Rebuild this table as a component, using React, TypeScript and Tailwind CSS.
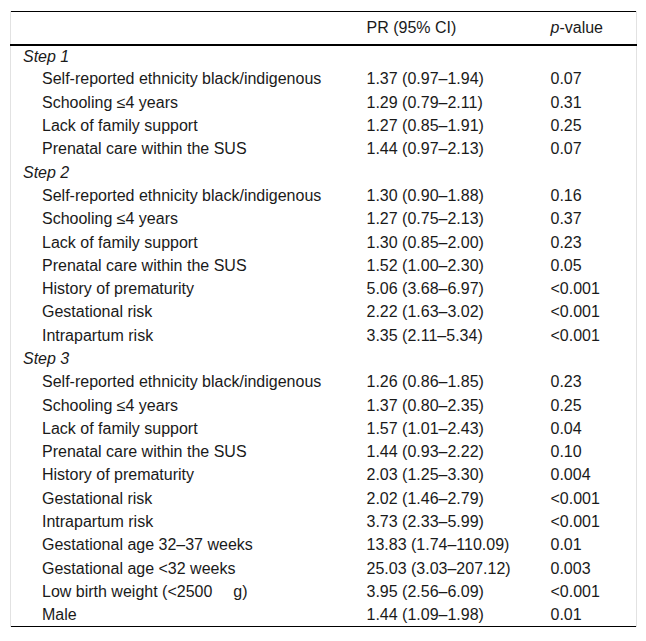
import { Fragment } from 'react';

type Row = { label: string; pr: string; p: string };

type Step = { title: string; rows: Row[] };

const steps: Step[] = [
  {
    title: 'Step 1',
    rows: [
      { label: 'Self-reported ethnicity black/indigenous', pr: '1.37 (0.97–1.94)', p: '0.07' },
      { label: 'Schooling ≤4 years', pr: '1.29 (0.79–2.11)', p: '0.31' },
      { label: 'Lack of family support', pr: '1.27 (0.85–1.91)', p: '0.25' },
      { label: 'Prenatal care within the SUS', pr: '1.44 (0.97–2.13)', p: '0.07' },
    ],
  },
  {
    title: 'Step 2',
    rows: [
      { label: 'Self-reported ethnicity black/indigenous', pr: '1.30 (0.90–1.88)', p: '0.16' },
      { label: 'Schooling ≤4 years', pr: '1.27 (0.75–2.13)', p: '0.37' },
      { label: 'Lack of family support', pr: '1.30 (0.85–2.00)', p: '0.23' },
      { label: 'Prenatal care within the SUS', pr: '1.52 (1.00–2.30)', p: '0.05' },
      { label: 'History of prematurity', pr: '5.06 (3.68–6.97)', p: '<0.001' },
      { label: 'Gestational risk', pr: '2.22 (1.63–3.02)', p: '<0.001' },
      { label: 'Intrapartum risk', pr: '3.35 (2.11–5.34)', p: '<0.001' },
    ],
  },
  {
    title: 'Step 3',
    rows: [
      { label: 'Self-reported ethnicity black/indigenous', pr: '1.26 (0.86–1.85)', p: '0.23' },
      { label: 'Schooling ≤4 years', pr: '1.37 (0.80–2.35)', p: '0.25' },
      { label: 'Lack of family support', pr: '1.57 (1.01–2.43)', p: '0.04' },
      { label: 'Prenatal care within the SUS', pr: '1.44 (0.93–2.22)', p: '0.10' },
      { label: 'History of prematurity', pr: '2.03 (1.25–3.30)', p: '0.004' },
      { label: 'Gestational risk', pr: '2.02 (1.46–2.79)', p: '<0.001' },
      { label: 'Intrapartum risk', pr: '3.73 (2.33–5.99)', p: '<0.001' },
      { label: 'Gestational age 32–37 weeks', pr: '13.83 (1.74–110.09)', p: '0.01' },
      { label: 'Gestational age <32 weeks', pr: '25.03 (3.03–207.12)', p: '0.003' },
      { label: 'LBW', pr: '3.95 (2.56–6.09)', p: '<0.001' },
      { label: 'Male', pr: '1.44 (1.09–1.98)', p: '0.01' },
    ],
  },
];

const Label = ({ text }: { text: string }) => {
  // the source renders a wide gap before the unit
  if (text === 'LBW') {
    return (
      <>
        Low birth weight (&lt;2500
        <span className="inline-block w-[21px]" />
        g)
      </>
    );
  }
  return <>{text}</>;
};

export default function App() {
  return (
    <div className="bg-white min-h-[641px] pt-[11px] pl-[10px] font-['Liberation_Sans',Arial,sans-serif] text-[16px] leading-[18px] text-[#1a1a1a]">
      <table className="w-[626px] border-collapse table-fixed">
        <colgroup>
          <col className="w-[344px]" />
          <col className="w-[184px]" />
          <col className="w-[98px]" />
        </colgroup>
        <thead>
          <tr className="h-[33px] border-t border-t-black border-b-2 border-b-black">
            <th className="border-l border-l-[#e2e2e2]" />
            <th className="pl-3 text-left font-normal">PR (95% CI)</th>
            <th className="pl-3 text-left font-normal border-r border-r-[#e2e2e2]">
              <i>p</i>-value
            </th>
          </tr>
        </thead>
        <tbody className="border-b border-b-black">
          {steps.map((step) => (
            <Fragment key={step.title}>
              <tr className="h-[23.3px]">
                <td className="pl-3 italic border-l border-l-[#e2e2e2]">{step.title}</td>
                <td />
                <td className="border-r border-r-[#e2e2e2]" />
              </tr>
              {step.rows.map((row, i) => (
                <tr key={step.title + i} className="h-[23.3px]">
                  <td className="pl-[31px] border-l border-l-[#e2e2e2] whitespace-nowrap">
                    <Label text={row.label} />
                  </td>
                  <td className="pl-3">{row.pr}</td>
                  <td className="pl-3 border-r border-r-[#e2e2e2]">{row.p}</td>
                </tr>
              ))}
            </Fragment>
          ))}
        </tbody>
      </table>
    </div>
  );
}
